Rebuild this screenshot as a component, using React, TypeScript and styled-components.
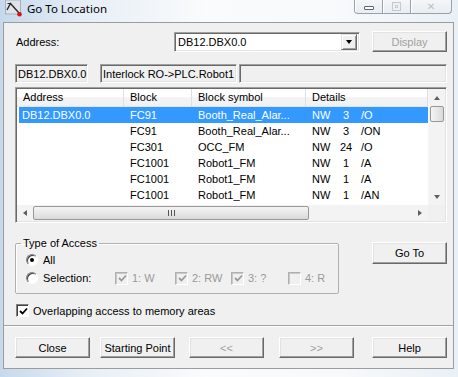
import { createGlobalStyle, styled } from "styled-components";

const GlobalStyle = createGlobalStyle`
  html, body {
    margin: 0;
    padding: 0;
  }
  body {
    font-family: "Liberation Sans", Arial, sans-serif;
    font-size: 11px;
    color: #000;
    background: #fff;
  }
  * {
    box-sizing: border-box;
  }
`;

type Row = {
  addr: string;
  block: string;
  sym: string;
  nw: string;
  op: string;
  sel?: boolean;
};

const rows: Row[] = [
  { addr: "DB12.DBX0.0", block: "FC91", sym: "Booth_Real_Alar...", nw: "3", op: "/O", sel: true },
  { addr: "", block: "FC91", sym: "Booth_Real_Alar...", nw: "3", op: "/ON" },
  { addr: "", block: "FC301", sym: "OCC_FM", nw: "24", op: "/O" },
  { addr: "", block: "FC1001", sym: "Robot1_FM", nw: "1", op: "/A" },
  { addr: "", block: "FC1001", sym: "Robot1_FM", nw: "1", op: "/A" },
  { addr: "", block: "FC1001", sym: "Robot1_FM", nw: "1", op: "/AN" },
];

const checks = [
  { label: "1: W", on: true, w: 60 },
  { label: "2: RW", on: true, w: 56 },
  { label: "3: ?", on: true, w: 57 },
  { label: "4: R", on: false, w: 50 },
];

const CheckMark = ({ color }: { color: string }) => (
  <svg width="9" height="9" viewBox="0 0 9 9">
    <path d="M1 4 L3.5 6.5 L8 1.5" fill="none" stroke={color} strokeWidth="1.8" />
  </svg>
);

// window icon: grey tile with a pointer stroke ending in a red dot
const AppIcon = () => (
  <svg width="17" height="17" viewBox="0 0 17 17" style={{ marginLeft: 2 }}>
    <rect x="0.5" y="0" width="15" height="14" fill="#dfe4ea" stroke="#a7b0ba" strokeWidth="1" />
    <path d="M2 10 L5.5 3.5 L14 13" fill="none" stroke="#2b2b2b" strokeWidth="1.4" />
    <path d="M5.5 3.5 L2.5 3.5" fill="none" stroke="#2b2b2b" strokeWidth="1" />
    <circle cx="14.5" cy="14.2" r="2.3" fill="#e01010" />
  </svg>
);

const App = () => {
  return (
    <>
      <GlobalStyle />
      <Window>
        <TitleBar>
          <AppIcon />
          <TitleText>Go To Location</TitleText>
          <Captions>
            <CapButton $w={27}>
              <MinGlyph />
            </CapButton>
            <CapButton $w={28}>
              <MaxGlyph />
            </CapButton>
            <CapButton $w={41}>
              <CloseGlyph>✕</CloseGlyph>
            </CapButton>
          </Captions>
        </TitleBar>

        <Panel>
          <AddressRow>
            <AddrLabel>Address:</AddrLabel>
            <Combo>
              <ComboText>DB12.DBX0.0</ComboText>
              <ComboArrow>
                <TriDown />
              </ComboArrow>
            </Combo>
            <DlgButton $off $ml={12}>Display</DlgButton>
          </AddressRow>

          <InfoRow>
            <ReadBox $w={73}>DB12.DBX0.0</ReadBox>
            <ReadBox $w={137} $ml={12}>Interlock RO-&gt;PLC.Robot1</ReadBox>
            <ReadBox $ml={2} />
          </InfoRow>

          <ListBox>
            <ListArea>
              <HeaderRow>
                <HeadCell>Address</HeadCell>
                <HeadCell>Block</HeadCell>
                <HeadCell>Block symbol</HeadCell>
                <HeadCell>Details</HeadCell>
              </HeaderRow>
              <Body>
                {rows.map((r, i) => (
                  <ItemRow key={i} $sel={r.sel}>
                    <Cell $pad={3}>{r.addr}</Cell>
                    <Cell>{r.block}</Cell>
                    <Cell>{r.sym}</Cell>
                    <Cell>
                      <NwPart>NW</NwPart>
                      <NumPart>{r.nw}</NumPart>
                      <OpPart>{r.op}</OpPart>
                    </Cell>
                  </ItemRow>
                ))}
              </Body>
            </ListArea>
            <VScroll>
              <VArrow>
                <TriUp />
              </VArrow>
              <VThumb />
              <VTrack />
              <VArrow>
                <TriDownSmall />
              </VArrow>
            </VScroll>
            <HScroll>
              <HArrow>
                <TriLeft />
              </HArrow>
              <HThumb>
                <Grip />
                <Grip />
                <Grip />
              </HThumb>
              <HTrack />
              <HArrow>
                <TriRight />
              </HArrow>
            </HScroll>
            <Corner />
          </ListBox>

          <AccessSection>
            <Group>
              <Legend>Type of Access</Legend>
              <OptionRow>
                <Radio $on />
                <OptionText>All</OptionText>
              </OptionRow>
              <OptionRow $mt={4}>
                <Radio />
                <OptionText $w={72}>Selection:</OptionText>
                {checks.map((c) => (
                  <CheckItem key={c.label} $w={c.w}>
                    <Box $off>{c.on && <CheckMark color="#9a9a9a" />}</Box>
                    <CheckText $off>{c.label}</CheckText>
                  </CheckItem>
                ))}
              </OptionRow>
            </Group>
            <DlgButton $h={22} $mt={5}>Go To</DlgButton>
          </AccessSection>

          <OverlapRow>
            <Box>
              <CheckMark color="#000" />
            </Box>
            <CheckText>Overlapping access to memory areas</CheckText>
          </OverlapRow>

          <Separator />

          <ButtonRow>
            <DlgButton $ml={0}>Close</DlgButton>
            <DlgButton $ml={10}>Starting Point</DlgButton>
            <DlgButton $ml={14} $off>&lt;&lt;</DlgButton>
            <DlgButton $ml={15} $off>&gt;&gt;</DlgButton>
            <DlgButton $ml={18}>Help</DlgButton>
          </ButtonRow>
        </Panel>
      </Window>
    </>
  );
};

const Window = styled.div`
  width: 458px;
  height: 377px;
  display: flex;
  flex-direction: column;
  padding: 0 4px 8px 3px;
  overflow: hidden;
  background: linear-gradient(90deg, #c6d9ec 0%, #e6eef6 18%, #fafbfc 45%, #f7f9fb 75%, #e9f0f6 100%);
`;

const TitleBar = styled.div`
  height: 22px;
  display: flex;
  align-items: flex-start;
`;

const TitleText = styled.div`
  margin: 1px 0 0 5px;
  font-family: "Noto Sans", "Open Sans", sans-serif;
  font-size: 11.5px;
  line-height: 16px;
  color: #000;
`;

const Captions = styled.div`
  margin-left: auto;
  margin-right: 2px;
  height: 14px;
  display: flex;
  border: 1px solid #98a1ab;
  border-top: none;
  border-radius: 0 0 4px 4px;
  background: linear-gradient(#f4f6f8, #e9edf1);
  overflow: hidden;
`;

const CapButton = styled.div<{ $w: number }>`
  width: ${(p) => p.$w}px;
  height: 100%;
  display: flex;
  align-items: center;
  justify-content: center;
  box-shadow: inset 1px 0 0 #fff;

  & + & {
    border-left: 1px solid #98a1ab;
  }
`;

const MinGlyph = styled.span`
  width: 10px;
  height: 4px;
  margin-top: 3px;
  border: 1px solid #5a6470;
  border-radius: 1px;
  background: #fff;
`;

const MaxGlyph = styled.span`
  width: 9px;
  height: 9px;
  border: 1px solid #c3c9cf;
  box-shadow: inset 0 0 0 2px #eef1f4, inset 0 0 0 3px #c9ced4;
`;

const CloseGlyph = styled.span`
  font-family: "DejaVu Sans", sans-serif;
  font-size: 10px;
  line-height: 10px;
  color: #b9c0c7;
`;

const Panel = styled.div`
  flex: 1;
  display: flex;
  flex-direction: column;
  background: #f0f0f0;
  border: 1px solid #9c9c9c;
  padding: 8px 6px 0 11px;
`;

const AddressRow = styled.div`
  height: 21px;
  display: flex;
  align-items: center;
`;

const AddrLabel = styled.div`
  width: 159px;
  padding-left: 1px;
`;

const Combo = styled.div`
  width: 186px;
  height: 20px;
  display: flex;
  align-items: center;
  background: #fff;
  border: 1px solid;
  border-color: #a0a0a0 #fff #fff #a0a0a0;
  box-shadow: inset 1px 1px 0 #696969, inset -1px -1px 0 #e3e3e3;
  padding: 2px;
`;

const ComboText = styled.div`
  flex: 1;
  padding-left: 1px;
`;

const ComboArrow = styled.div`
  width: 16px;
  height: 16px;
  display: flex;
  align-items: center;
  justify-content: center;
  background: #f0f0f0;
  border: 1px solid;
  border-color: #e3e3e3 #696969 #696969 #e3e3e3;
  box-shadow: inset 1px 1px 0 #fff, inset -1px -1px 0 #a0a0a0;
`;

const TriDown = styled.span`
  width: 0;
  height: 0;
  border-left: 3.5px solid transparent;
  border-right: 3.5px solid transparent;
  border-top: 4px solid #000;
`;

const TriDownSmall = styled(TriDown)`
  border-top-color: #606060;
`;

const TriUp = styled.span`
  width: 0;
  height: 0;
  border-left: 3.5px solid transparent;
  border-right: 3.5px solid transparent;
  border-bottom: 4px solid #606060;
`;

const TriLeft = styled.span`
  width: 0;
  height: 0;
  border-top: 3.5px solid transparent;
  border-bottom: 3.5px solid transparent;
  border-right: 4px solid #606060;
`;

const TriRight = styled.span`
  width: 0;
  height: 0;
  border-top: 3.5px solid transparent;
  border-bottom: 3.5px solid transparent;
  border-left: 4px solid #606060;
`;

const DlgButton = styled.button<{ $off?: boolean; $ml?: number; $mt?: number; $h?: number }>`
  width: 75px;
  height: ${(p) => p.$h ?? 21}px;
  margin: ${(p) => p.$mt ?? 0}px 0 0 ${(p) => p.$ml ?? 0}px;
  padding: 0;
  flex-shrink: 0;
  font-family: "Liberation Sans", Arial, sans-serif;
  font-size: 11px;
  color: ${(p) => (p.$off ? "#a0a0a0" : "#000")};
  background: #f0f0f0;
  border: 1px solid;
  border-color: #fff #696969 #696969 #fff;
  box-shadow: inset -1px -1px 0 #a0a0a0, inset 1px 1px 0 #e3e3e3;
  border-radius: 0;
`;

const InfoRow = styled.div`
  margin-top: 12px;
  height: 19px;
  display: flex;
`;

const ReadBox = styled.div<{ $w?: number; $ml?: number }>`
  ${(p) => (p.$w ? `width: ${p.$w}px;` : "flex: 1;")}
  margin-left: ${(p) => p.$ml ?? 0}px;
  height: 100%;
  padding: 0 0 0 2px;
  display: flex;
  align-items: center;
  white-space: nowrap;
  background: #f0f0f0;
  border: 1px solid;
  border-color: #a0a0a0 #fff #fff #a0a0a0;
  box-shadow: inset 1px 1px 0 #696969, inset -1px -1px 0 #e3e3e3;
`;

const ListBox = styled.div`
  margin-top: 4px;
  height: 136px;
  display: grid;
  grid-template-columns: 1fr 17px;
  grid-template-rows: 116px 16px;
  padding: 1px;
  background: #fff;
  border: 1px solid;
  border-color: #a0a0a0 #fff #fff #a0a0a0;
  box-shadow: inset 1px 1px 0 #696969, inset -1px -1px 0 #e3e3e3;
`;

const ListArea = styled.div`
  overflow: hidden;
`;

const cols = "107px 68px 114px 122px";

const HeaderRow = styled.div`
  height: 18px;
  display: grid;
  grid-template-columns: ${cols};
  background: linear-gradient(#ffffff, #ffffff 45%, #f3f4f6 50%, #f0f1f3);
  border-bottom: 1px solid #e4e6e9;
`;

const HeadCell = styled.div`
  padding-left: 6px;
  line-height: 17px;
  border-right: 1px solid #dcdfe3;
  white-space: nowrap;
`;

const Body = styled.div`
  padding-left: 2px;
`;

const ItemRow = styled.div<{ $sel?: boolean }>`
  height: 16px;
  display: grid;
  grid-template-columns: 105px 68px 114px 122px;
  line-height: 16px;
  background: ${(p) => (p.$sel ? "#3399ff" : "transparent")};
  color: ${(p) => (p.$sel ? "#fff" : "#000")};
`;

const Cell = styled.div<{ $pad?: number }>`
  padding-left: ${(p) => p.$pad ?? 6}px;
  white-space: nowrap;
  overflow: hidden;
  display: flex;
`;

const NwPart = styled.span`
  width: 27px;
`;

const NumPart = styled.span`
  width: 14px;
  text-align: center;
`;

const OpPart = styled.span`
  margin-left: 8px;
`;

const VScroll = styled.div`
  display: flex;
  flex-direction: column;
  background: #f3f3f3;
  border-left: 1px solid #f7f7f7;
`;

const VArrow = styled.div`
  height: 17px;
  display: flex;
  align-items: center;
  justify-content: center;
`;

const VThumb = styled.div`
  height: 16px;
  margin: 0 1px;
  border: 1px solid #979797;
  border-radius: 2px;
  background: linear-gradient(90deg, #f4f4f4, #e8e8e8 50%, #d9d9d9);
`;

const VTrack = styled.div`
  flex: 1;
`;

const HScroll = styled.div`
  display: flex;
  background: #f3f3f3;
`;

const HArrow = styled.div`
  width: 16px;
  display: flex;
  align-items: center;
  justify-content: center;
`;

const HThumb = styled.div`
  width: 276px;
  margin: 1px 0;
  display: flex;
  align-items: center;
  justify-content: center;
  gap: 2px;
  border: 1px solid #979797;
  border-radius: 2px;
  background: linear-gradient(#f4f4f4, #e8e8e8 50%, #d9d9d9);
`;

const Grip = styled.span`
  width: 1px;
  height: 6px;
  background: #555;
`;

const HTrack = styled.div`
  flex: 1;
`;

const Corner = styled.div`
  background: #f0f0f0;
`;

const AccessSection = styled.div`
  margin-top: 14px;
  display: flex;
  align-items: flex-start;
  justify-content: space-between;
`;

const Group = styled.fieldset`
  width: 320px;
  height: 57px;
  margin: 0;
  padding: 3px 0 0 10px;
  border: 1px solid #b0b0b0;
  border-radius: 2px;
  box-shadow: inset 1px 1px 0 #fff;
`;

const Legend = styled.legend`
  margin-left: -5px;
  padding: 0 2px;
  font-size: 11px;
  line-height: 13px;
`;

const OptionRow = styled.div<{ $mt?: number }>`
  height: 14px;
  margin-top: ${(p) => p.$mt ?? 0}px;
  display: flex;
  align-items: center;
`;

const Radio = styled.span<{ $on?: boolean }>`
  width: 12px;
  height: 12px;
  border-radius: 50%;
  border: 1px solid;
  border-color: #808080 #fff #fff #808080;
  box-shadow: inset 1px 1px 0 #404040;
  background: #fff;
  display: flex;
  align-items: center;
  justify-content: center;

  &::after {
    content: "";
    width: 4px;
    height: 4px;
    border-radius: 50%;
    background: ${(p) => (p.$on ? "#000" : "transparent")};
  }
`;

const OptionText = styled.span<{ $w?: number }>`
  margin-left: 5px;
  ${(p) => (p.$w ? `width: ${p.$w}px;` : "")}
`;

const CheckItem = styled.div<{ $w: number }>`
  width: ${(p) => p.$w}px;
  display: flex;
  align-items: center;
`;

const Box = styled.span<{ $off?: boolean }>`
  width: 13px;
  height: 13px;
  flex-shrink: 0;
  display: flex;
  align-items: center;
  justify-content: center;
  border: 1px solid;
  border-color: ${(p) => (p.$off ? "#b0b0b0 #fff #fff #b0b0b0" : "#808080 #fff #fff #808080")};
  box-shadow: inset 1px 1px 0 ${(p) => (p.$off ? "#c8c8c8" : "#404040")};
  background: ${(p) => (p.$off ? "#f0f0f0" : "#fff")};
  padding: 1px 0 0 1px;
`;

const CheckText = styled.span<{ $off?: boolean }>`
  margin-left: 4px;
  white-space: nowrap;
  color: ${(p) => (p.$off ? "#9a9a9a" : "#000")};
`;

const OverlapRow = styled.div`
  margin-top: 10px;
  height: 13px;
  padding-left: 1px;
  display: flex;
  align-items: center;
`;

const Separator = styled.div`
  margin: 8px -6px 0 -11px;
  height: 2px;
  border-top: 1px solid #a0a0a0;
  border-bottom: 1px solid #fff;
`;

const ButtonRow = styled.div`
  margin-top: 10px;
  display: flex;
`;

export default App;
